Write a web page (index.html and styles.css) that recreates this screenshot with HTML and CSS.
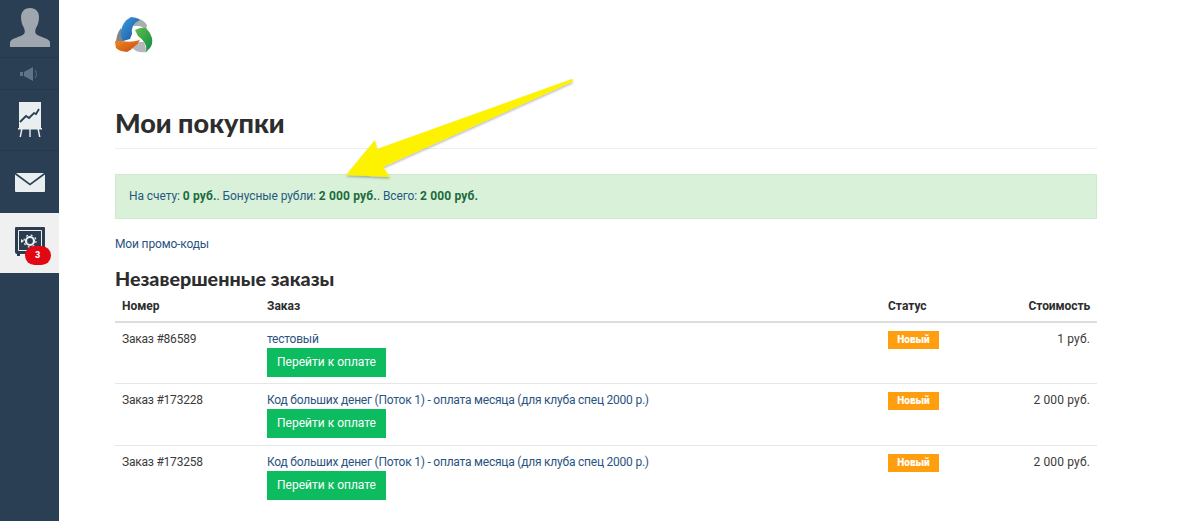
FILE: index.html
```html
<!DOCTYPE html>
<html lang="ru">
<head>
<meta charset="utf-8">
<title>Мои покупки</title>
<link rel="stylesheet" href="styles.css">
</head>
<body>
<div class="app">
  <nav class="sidebar">
    <div class="side-item avatar">
      <svg width="40" height="39" viewBox="0 0 40 39"><path fill="#9fa6ad" d="M20 0c6 0 9 4 9 9 0 4-1 8-3 11-1 2-1 5 0 6 3 3 13 4 14 8v5H0v-5c1-4 11-5 14-8 1-1 1-4 0-6-2-3-3-7-3-11 0-5 3-9 9-9z"/></svg>
    </div>
    <div class="side-item speaker">
      <svg width="20" height="14" viewBox="0 0 20 14"><path fill="#5f7488" d="M0 5h3v4H0zM4 5l9-5v14L4 9z"/><path fill="none" stroke="#4c6378" stroke-width="1.2" d="M15 3c2 2 2 6 0 8"/></svg>
    </div>
    <div class="side-item chart">
      <svg width="24" height="36" viewBox="0 0 24 36"><path fill="#e9eff1" d="M1 0h22v26H1z"/><path fill="none" stroke="#2b3e50" stroke-width="1.8" d="M2 20l6-6 3 2 5-5 2 1 3-5"/><path fill="#e9eff1" d="M0 26h24v1.500H0zM3 27.500h1.500L3 35H1.500zM11.300 27.500h1.400V35h-1.400zM19.500 27.500H21l1.500 7.500H21z"/></svg>
    </div>
    <div class="side-item mail">
      <svg width="30" height="19" viewBox="0 0 30 19"><path fill="#e9eff1" d="M1 0h28L15 10.500zM0 1.500l15 11 15-11V18a1 1 0 0 1-1 1H1a1 1 0 0 1-1-1z"/></svg>
    </div>
    <div class="side-item active">
      <div class="safe">
        <svg width="30" height="30" viewBox="0 0 30 30"><path fill="#2b3e50" d="M1 0h28a1 1 0 0 1 1 1v26H5v2H2v-2a2 2 0 0 1-2-2V1a1 1 0 0 1 1-1z"/><path fill="none" stroke="#eef1f3" stroke-width="1" d="M3.500 3.500h23v20h-23z"/><circle cx="15" cy="14" r="4" fill="none" stroke="#eef1f3" stroke-width="2.200"/><circle cx="15" cy="14" r="6" fill="none" stroke="#eef1f3" stroke-width="1.200" stroke-dasharray="2 2.700"/><path fill="#eef1f3" d="M6 12l3 2-3 2z"/></svg>
        <span class="badge">3</span>
      </div>
    </div>
  </nav>

  <main class="content">
    <div class="logo">
      <svg width="38" height="36" viewBox="0 0 38 36">
        <defs>
          <linearGradient id="lb" x1="0" y1="0" x2="1" y2="1"><stop offset="0" stop-color="#3aa0e0"/><stop offset="1" stop-color="#1c4f9c"/></linearGradient>
          <linearGradient id="lg" x1="0" y1="0" x2="1" y2="1"><stop offset="0" stop-color="#5cc04a"/><stop offset="1" stop-color="#128a45"/></linearGradient>
          <linearGradient id="lo" x1="0" y1="0" x2="1" y2="1"><stop offset="0" stop-color="#f08a20"/><stop offset="1" stop-color="#c8480f"/></linearGradient>
        </defs>
        <path fill="#a9aeb3" d="M22 1Q29 3 32 8L31 13Q27 9 23 9L18 9z"/>
        <path fill="#b4b8bc" d="M32 35Q26 36 21 34L16 30 24 25 29 25z"/>
        <path fill="#7f858a" d="M1 24Q2 16 6 11L9 24z"/>
        <path fill="url(#lb)" d="M16 0Q21 0 25 3Q20 5 18 9Q16 13 17 17L15 22 8 24Q5 18 6 14Q7 9 9 6Q12 2 16 0z"/>
        <path fill="url(#lg)" d="M20 13Q26 10 31 11Q35 15 37 21Q38 27 35 31L31 35Q32 29 29 25Q26 21 23 19z"/>
        <path fill="url(#lo)" d="M0 24L7 24Q16 26 25 23Q23 27 20 29Q16 33 12 35L6 34Q3 33 1 31Q0 27 0 24z"/>
      </svg>
    </div>
    <h1 class="page-title">Мои покупки</h1>
    <div class="alert">На счету: <b>0 руб.</b>. Бонусные рубли: <b>2 000 руб.</b>. Всего: <b>2 000 руб.</b></div>
    <a class="promo link" href="#">Мои промо-коды</a>
    <h2 class="section-title">Незавершенные заказы</h2>
    <table class="orders">
      <thead>
        <tr><th class="c-num">Номер</th><th>Заказ</th><th class="c-status">Статус</th><th class="c-price">Стоимость</th></tr>
      </thead>
      <tbody>
        <tr>
          <td>Заказ #86589</td>
          <td><a class="link" href="#">тестовый</a><a class="pay" href="#">Перейти к оплате</a></td>
          <td><span class="label">Новый</span></td>
          <td class="c-price">1 руб.</td>
        </tr>
        <tr>
          <td>Заказ #173228</td>
          <td><a class="link" href="#">Код больших денег (Поток 1) - оплата месяца (для клуба спец 2000 р.)</a><a class="pay" href="#">Перейти к оплате</a></td>
          <td><span class="label">Новый</span></td>
          <td class="c-price">2 000 руб.</td>
        </tr>
        <tr>
          <td>Заказ #173258</td>
          <td><a class="link" href="#">Код больших денег (Поток 1) - оплата месяца (для клуба спец 2000 р.)</a><a class="pay" href="#">Перейти к оплате</a></td>
          <td><span class="label">Новый</span></td>
          <td class="c-price">2 000 руб.</td>
        </tr>
      </tbody>
    </table>
    <svg class="arrow" width="240" height="115" viewBox="0 0 240 115">
      <defs><filter id="sh" x="-10%" y="-10%" width="120%" height="130%"><feDropShadow dx="0" dy="1.500" stdDeviation="1.200" flood-color="#000" flood-opacity=".3"/></filter></defs>
      <path filter="url(#sh)" fill="#fdf200" d="M232 9Q234 10 232 12L43 97 50 107 6 105 35 70 37 79z"/>
    </svg>
  </main>
</div>
</body>
</html>
```

FILE: styles.css
```css
* { box-sizing: border-box; }
html, body { margin: 0; height: 100%; }
body {
  background: #fff;
  color: #3a3a3a;
  font-family: Roboto, Lato, sans-serif;
  font-size: 12px;
  overflow: hidden;
}
.app { display: flex; height: 521px; }
.sidebar {
  width: 59px;
  flex: none;
  background: #2b3f54;
  display: flex;
  flex-direction: column;
}
.side-item {
  display: flex;
  align-items: center;
  justify-content: center;
  border-bottom: 1px solid #26384b;
}
.avatar { height: 58px; padding-bottom: 2px; }
.speaker { height: 32px; }
.chart { height: 61px; }
.mail { height: 62px; border-bottom: 0; }
.active { height: 60px; background: #f0f0f0; border-bottom: 0; }
.safe { position: relative; width: 30px; height: 30px; top: -1px; }
.safe svg { display: block; }
.badge {
  position: absolute;
  left: 10px;
  top: 19px;
  width: 26px;
  height: 19px;
  border-radius: 10px;
  background: #e30613;
  color: #fff;
  font-size: 9px;
  font-weight: 900;
  line-height: 19px;
  text-align: center;
}
.content {
  position: relative;
  width: 982px;
  margin-left: 56px;
}
.logo { height: 91px; padding-top: 17px; }
.logo svg { display: block; }
.page-title {
  margin: 0;
  height: 58px;
  padding-top: 14px;
  border-bottom: 1px solid #eee;
  font-family: Lato, sans-serif;
  font-size: 27px;
  font-weight: 900;
  line-height: 36px;
  color: #2d2d2d;
}
.alert {
  margin-top: 25px;
  height: 45px;
  padding: 0 13px;
  background: #d9f1d9;
  border: 1px solid #cfe9cd;
  color: #255a7d;
  line-height: 43px;
  letter-spacing: -0.08px;
}
.alert b { color: #1b6b3c; font-weight: 700; letter-spacing: 0.15px; }
.link { color: #2a5480; text-decoration: none; }
.promo { display: block; margin-top: 17px; line-height: 16px; letter-spacing: -0.15px; }
.section-title {
  margin: 15px 0 0;
  font-family: Lato, sans-serif;
  font-size: 19.700px;
  font-weight: 900;
  line-height: 24px;
  color: #2d2d2d;
}
.orders {
  width: 100%;
  border-collapse: collapse;
  table-layout: fixed;
}
.orders th {
  height: 31px;
  padding: 0 7px;
  text-align: left;
  font-weight: 700;
  color: #2d2d2d;
  border-bottom: 2px solid #ddd;
}
.orders th.c-num { width: 145px; }
.orders th.c-status { width: 136px; }
.orders th.c-price { width: 80px; text-align: right; letter-spacing: -0.1px; }
.orders td {
  height: 61.500px;
  padding: 8px 7px 0;
  vertical-align: top;
  line-height: 16px;
  border-bottom: 1px solid #e6e6e6;
  letter-spacing: -0.22px;
}
.orders tr:last-child td { border-bottom: 0; }
.orders td.c-price { text-align: right; letter-spacing: 0.15px; }
.pay {
  display: block;
  width: 119px;
  height: 29px;
  margin-top: 1px;
  background: #0dbc5f;
  color: #fff;
  text-align: center;
  text-decoration: none;
  line-height: 29px;
  letter-spacing: 0;
}
.label {
  display: block;
  width: 51px;
  height: 18px;
  background: #ff9f0f;
  color: #fff;
  font-size: 10px;
  font-weight: 900;
  line-height: 18px;
  text-align: center;
  letter-spacing: 0;
}
.arrow { position: absolute; left: 225px; top: 70px; }
```
